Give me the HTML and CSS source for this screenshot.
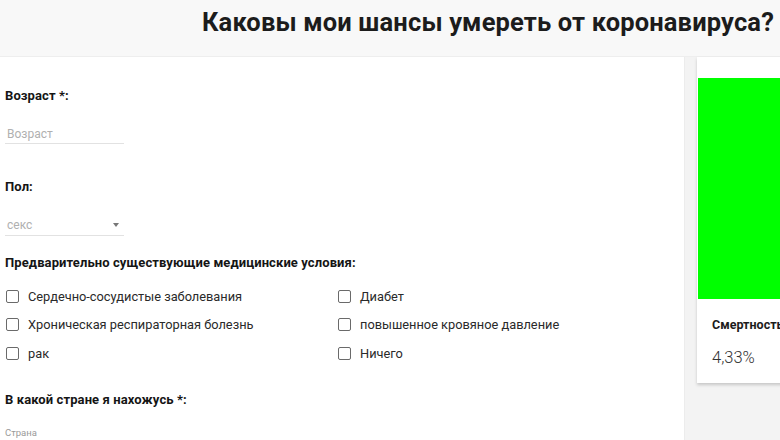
FILE: index.html
```html
<!DOCTYPE html>
<html lang="ru">
  <head>
    <meta charset="UTF-8" />
    <meta name="viewport" content="width=device-width, initial-scale=1.0" />
    <title>Каковы мои шансы умереть от коронавируса?</title>
    <link rel="stylesheet" href="styles.css">
  </head>
  <body>
    <div class="header">
      <h1>Каковы мои шансы умереть от коронавируса?</h1>
    </div>

    <div class="main">
      <!-- Форма с данными пользователя -->
      <div class="form-panel">
        <p class="field-label first">Возраст *:</p>
        <div class="text-input">
          <span class="placeholder">Возраст</span>
        </div>

        <p class="field-label">Пол:</p>
        <div class="select-input">
          <span class="placeholder">секс</span>
          <span class="arrow"></span>
        </div>

        <p class="field-label">Предварительно существующие медицинские условия:</p>
        <div class="checks">
          <label class="check"><span class="box"></span>Сердечно-сосудистые заболевания</label>
          <label class="check"><span class="box"></span>Диабет</label>
          <label class="check"><span class="box"></span>Хроническая респираторная болезнь</label>
          <label class="check"><span class="box"></span>повышенное кровяное давление</label>
          <label class="check"><span class="box"></span>рак</label>
          <label class="check"><span class="box"></span>Ничего</label>
        </div>

        <p class="field-label">В какой стране я нахожусь *:</p>
        <div class="country">Страна</div>
      </div>

      <!-- Карточка с результатом -->
      <div class="result-card">
        <div class="result-bar"></div>
        <div class="result-body">
          <p class="result-title">Смертность</p>
          <p class="result-value">4,33%</p>
        </div>
      </div>
    </div>
  </body>
</html>
```

FILE: styles.css
```css
body {
  margin: 0;
  font-family: Roboto, "Noto Sans", sans-serif;
  background-color: #f3f3f3;
  width: 780px;
  height: 440px;
  overflow: hidden;
}
p {
  margin: 0;
}
.header {
  height: 57px;
  background-color: #f8f8f8;
  display: flex;
  justify-content: flex-end;
  align-items: center;
  padding-right: 6px;
  box-sizing: border-box;
  border-bottom: 1px solid #eeeeee;
}
.header h1 {
  margin: 0 0 12px 0;
  font-size: 25.5px;
  font-weight: 700;
  color: #1c1c1c;
  white-space: nowrap;
  letter-spacing: 0.15px;
}
.main {
  display: flex;
  gap: 12px;
  align-items: flex-start;
}
.form-panel {
  width: 685px;
  flex-shrink: 0;
  height: 383px;
  background-color: #fff;
  padding: 31px 0 0 5px;
  box-sizing: border-box;
  border-right: 1px solid #ececec;
}
.field-label {
  font-size: 13px;
  font-weight: 700;
  line-height: 16px;
  color: #151515;
  letter-spacing: 0.1px;
}
.placeholder {
  font-size: 12px;
  color: #b0b0b0;
}
.text-input,
.select-input {
  width: 117px;
  height: 20px;
  line-height: 20px;
  border-bottom: 1px solid #e2e2e2;
  padding-left: 2px;
  box-sizing: content-box;
}
.text-input {
  margin: 19px 0 35px 0;
}
.select-input {
  margin: 20px 0 19px 0;
  display: flex;
  justify-content: space-between;
  align-items: center;
}
.arrow {
  width: 0;
  height: 0;
  border-left: 3px solid transparent;
  border-right: 3px solid transparent;
  border-top: 4px solid #777;
  margin-right: 5px;
}
.checks {
  display: grid;
  grid-template-columns: 332px 1fr;
  grid-auto-rows: 28.5px;
  margin: 11px 0 24px 0;
}
.check {
  display: flex;
  align-items: center;
  font-size: 12.8px;
  color: #2a2a2a;
}
.box {
  width: 11px;
  height: 11px;
  border: 1.5px solid #6a6a6a;
  border-radius: 2px;
  margin: 0 9px 0 1px;
}
.country {
  margin-top: 19px;
  font-size: 9.5px;
  color: #9a9a9a;
}
.result-card {
  width: 200px;
  flex-shrink: 0;
  background-color: #fff;
  padding-top: 21px;
  box-shadow: 0 2px 3px rgba(0, 0, 0, 0.18);
}
.result-bar {
  height: 221px;
  margin-left: 1px;
  background-color: #00ff00;
}
.result-body {
  padding: 18px 0 15px 15px;
}
.result-title {
  font-size: 12.5px;
  font-weight: 700;
  line-height: 16px;
  color: #1c1c1c;
  white-space: nowrap;
}
.result-value {
  margin-top: 15px;
  font-size: 16.5px;
  font-weight: 300;
  line-height: 20px;
  color: #333;
}
```
